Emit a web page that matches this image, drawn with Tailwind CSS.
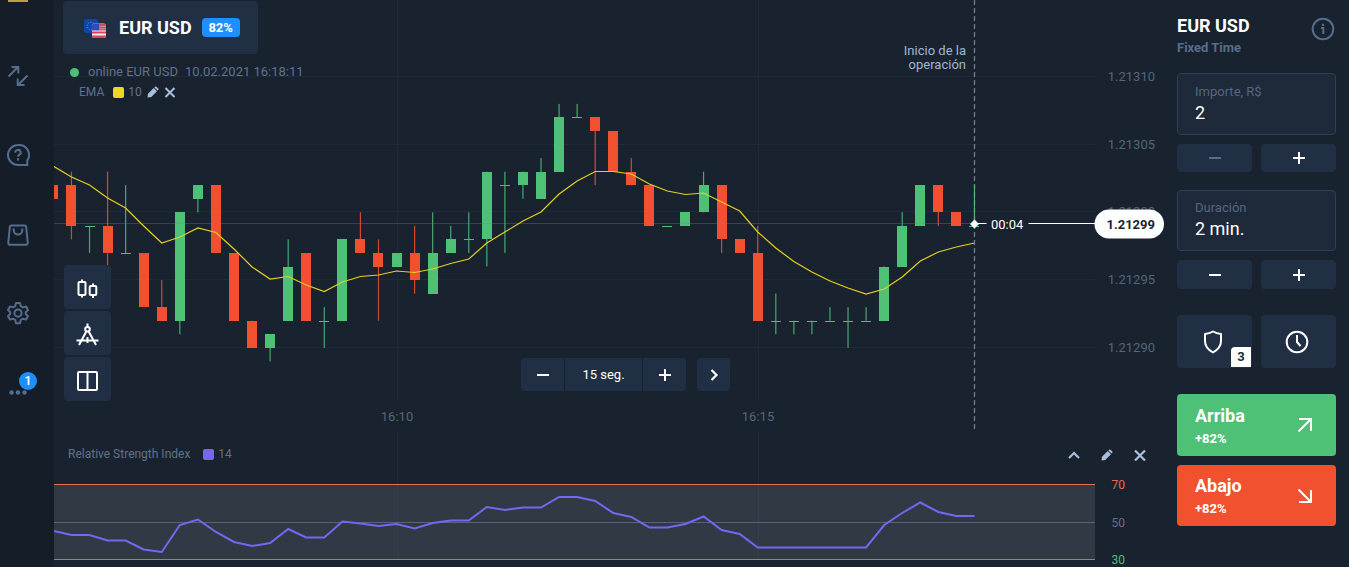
<!DOCTYPE html>
<html lang="es">
<head>
<meta charset="utf-8">
<meta name="viewport" content="width=device-width, initial-scale=1">
<title>EUR USD</title>
<script src="https://cdn.jsdelivr.net/npm/@tailwindcss/browser@4"></script>
</head>
<body class="bg-[#18232f] font-['Roboto',sans-serif] text-white">
<div class="flex min-h-screen overflow-hidden">

  <nav class="flex w-[54px] shrink-0 flex-col bg-[#151d28] text-[#566e8d]">
    <div class="ml-2 h-[2px] w-5 bg-[#c79a3e]"></div>
    <a href="#" aria-label="Operaciones" class="mt-[62px] ml-[6px] block"><svg class="size-6" viewBox="0 0 24 24" fill="none" stroke="currentColor" stroke-width="2"><path d="M2.500 12.500 12 3M5.500 3H12.300V9.500M21.500 11.500 12 21M11.700 14.500V21H18.500"/></svg></a>
    <a href="#" aria-label="Ayuda" class="mt-[55px] ml-[6px] block"><svg class="size-6" viewBox="0 0 24 24" fill="none" stroke="currentColor" stroke-width="2"><path d="M12 2A10 10 0 1 0 12 22H21.300V17.500A10 10 0 0 0 12 2Z"/><path d="M9.300 9.600A2.700 2.500 0 1 1 13.300 11.600C12.400 12.200 12 12.600 12 13.800M12 15.300V17.400"/></svg></a>
    <a href="#" aria-label="Mercado" class="mt-14 ml-[6px] block"><svg class="size-6" viewBox="0 0 24 24" fill="none" stroke="currentColor" stroke-width="2"><path d="M5.500 2.500H18.500Q20 2.500 20.200 4L21.700 19.500Q21.800 21.800 19.500 21.800H4.500Q2.200 21.800 2.300 19.500L3.800 4Q4 2.500 5.500 2.500Z"/><path d="M7.700 5.500V7.200A4.300 4.300 0 0 0 16.300 7.200V5.500"/></svg></a>
    <a href="#" aria-label="Ajustes" class="mt-[54px] ml-[6px] block"><svg class="size-6" viewBox="0 0 24 24" fill="none" stroke="currentColor" stroke-width="2" stroke-linejoin="round"><path d="M10 2H14L14.700 5.100 17 6.400 20 5.500 22 9 19.800 11.200V13L22 15.200 20 18.600 17 17.700 14.700 19 14 22.200H10L9.300 19 7 17.700 4 18.600 2 15.200 4.200 13V11.200L2 9 4 5.500 7 6.400 9.300 5.100Z"/><circle cx="12" cy="12.100" r="3.600"/></svg></a>
    <a href="#" aria-label="Más" class="relative mt-[46px] ml-2 block h-6 w-8"><svg class="size-full" viewBox="0 0 32 24" fill="currentColor"><circle cx="3.500" cy="21.500" r="2.200"/><circle cx="10" cy="21.500" r="2.200"/><circle cx="16.500" cy="21.500" r="2.200"/></svg><span class="absolute top-px left-[11px] flex size-[18px] items-center justify-center rounded-full bg-[#1c90ff] text-[13px] font-medium text-white">1</span></a>
  </nav>

  <main class="flex min-w-0 flex-1 flex-col">
    <section class="relative h-[431px]" aria-label="Gráfico EUR USD">
      <svg class="absolute inset-0 h-full w-full" viewBox="54 0 1111 431" preserveAspectRatio="xMinYMin meet">
        <g stroke="#1e2a37" stroke-width="1"><path d="M54 76.500H1095M54 144.500H1095M54 211.500H1095M54 279.500H1095M54 347.500H1095M397.500 0V401M758.500 0V401"/></g>
        <g id="candles"></g>
        <path d="M54 223.500H975" stroke="#6f8198" stroke-opacity=".35"/>
        <polyline id="ema" fill="none" stroke="#e6cf1e" stroke-width="1.200"/>
        <path d="M974.500 0V431" stroke="#73808c" stroke-width="1.300" stroke-dasharray="5 3"/>
        <path d="M974.500 185V224" stroke="#4fc177" stroke-opacity=".7"/>
        <g fill="#566579" font-size="13" text-anchor="end"><text x="1155" y="81">1.21310</text><text x="1155" y="149">1.21305</text><text x="1155" y="216">1.21300</text><text x="1155" y="284">1.21295</text><text x="1155" y="352">1.21290</text></g>
        <g fill="#566579" font-size="13" text-anchor="middle"><text x="397" y="421">16:10</text><text x="758" y="421">16:15</text></g>
        <g fill="#a0b6d4" font-size="13" text-anchor="end"><text x="966" y="55">Inicio de la</text><text x="966" y="69">operación</text></g>
        <path d="M975 223.500H986.500M1028.500 223.500H1096" stroke="#fff" stroke-width="1.200"/>
        <path d="M974.500 219.500 979 224 974.500 228.500 970 224Z" fill="#fff"/>
        <text x="991" y="229" fill="#fff" font-size="13">00:04</text>
        <rect x="1094.500" y="209.500" width="69.500" height="29" rx="14.500" fill="#fff"/>
        <text x="1155" y="229" fill="#18232f" font-size="13" font-weight="700" text-anchor="end">1.21299</text>
      </svg>

      <button class="absolute top-px left-[9px] flex h-[53px] w-[195px] items-center rounded bg-[#202f43] pl-[21px]">
        <svg class="h-5 w-[23px]" viewBox="0 0 23 20"><rect width="14" height="14" rx="2.500" y="1" fill="#0b47ae"/><circle cx="7" cy="8" r="3.800" fill="none" stroke="#c1b44c" stroke-opacity=".7" stroke-width="1" stroke-dasharray="1 1.400"/><rect x="8" y="5.500" width="14" height="14.500" rx="2.500" fill="#f3f0f3"/><path d="M15.500 5.500H20Q22 5.500 22 8V12.500H15.500ZM8 13.500H22V15.500H8ZM8 17.500H22Q22 20 19.500 20H10.500Q8 20 8 17.500Z" fill="#dc4258"/><path d="M15.500 8.500H22M15.500 10.800H22" stroke="#c79aa6"/><path d="M8 8Q8 5.500 10.500 5.500H15.500V12.500H8Z" fill="#3944bd"/></svg>
        <span class="ml-3 text-[18px] font-bold">EUR USD</span>
        <span class="ml-[10px] flex h-[19px] w-[38px] items-center justify-center rounded bg-[#1c90ff] text-[13px] font-bold">82%</span>
      </button>

      <div class="absolute top-[63px] left-4 flex h-[18px] items-center text-[13px] text-[#62728a]">
        <span class="size-[9px] rounded-full bg-[#4dc077]"></span>
        <span class="ml-[9px]">online EUR USD</span><span class="ml-[7px]">10.02.2021 16:18:11</span>
      </div>
      <div class="absolute top-[84px] left-[25px] flex h-4 items-center text-xs text-[#62728a]">
        <span>EMA</span><span class="ml-[9px] size-[11px] rounded-xs bg-[#efd524]"></span><span class="ml-1">10</span>
        <button aria-label="Editar EMA" class="ml-[5px] text-[#a9bfdc]"><svg class="size-3" viewBox="0 0 12 12" fill="currentColor"><path d="M.500 11.500 1 7.700 6.700 2 10 5.300 4.300 11ZM7.400 1.400 8.300.500Q9 .200 9.700.900L11.100 2.300Q11.800 3 11.400 3.700L10.600 4.600Z"/></svg></button>
        <button aria-label="Quitar EMA" class="ml-[5px] text-[#a9bfdc]"><svg class="size-3" viewBox="0 0 12 12" stroke="currentColor" stroke-width="2"><path d="M1.500 2 10.500 11M10.500 2 1.500 11"/></svg></button>
      </div>

      <div class="absolute top-[265px] left-[10px] flex flex-col gap-[2px]">
        <button aria-label="Tipo de gráfico" class="flex h-11 w-[47px] items-center justify-center rounded bg-[#202f43] pt-1"><svg class="size-6" viewBox="0 0 24 24" fill="none" stroke="#fff" stroke-width="2"><rect x="2.500" y="5" width="7" height="13" rx="1"/><path d="M6 2.500V5M6 18V20.500M17 6.500V9M17 18V21"/><rect x="13.700" y="9" width="6.600" height="9" rx="1"/></svg></button>
        <button aria-label="Dibujo" class="flex h-11 w-[47px] items-center justify-center rounded bg-[#202f43] pt-1"><svg class="size-6" viewBox="0 0 24 24" fill="none" stroke="#fff" stroke-width="2"><path d="M11.500 .500V4M10.300 8.500 3 22M12.700 8.500 20 22M.500 17.500H22.500M11.500 14V20"/><circle cx="11.500" cy="6.200" r="2.300"/></svg></button>
        <button aria-label="Diseño" class="flex h-11 w-[47px] items-center justify-center rounded bg-[#202f43] pt-1"><svg class="size-6" viewBox="0 0 24 24" fill="none" stroke="#fff" stroke-width="2"><rect x="2" y="3" width="19" height="18" rx="1"/><path d="M11.500 3V21"/></svg></button>
      </div>

      <div class="absolute top-[358px] left-[467px] flex h-[33px] text-white">
        <button aria-label="Reducir intervalo" class="flex w-[43px] items-center justify-center rounded-l bg-[#202f43]"><svg class="size-3" viewBox="0 0 12 12" stroke="currentColor" stroke-width="2"><path d="M0 6H12"/></svg></button>
        <button class="ml-px w-[77px] bg-[#202f43] text-[13px]">15 seg.</button>
        <button aria-label="Ampliar intervalo" class="ml-px flex w-[43px] items-center justify-center rounded-r bg-[#202f43]"><svg class="size-3" viewBox="0 0 12 12" stroke="currentColor" stroke-width="2"><path d="M0 6H12M6 0V12"/></svg></button>
        <button aria-label="Siguiente" class="ml-[11px] flex w-[33px] items-center justify-center rounded bg-[#202f43]"><svg class="size-3" viewBox="0 0 12 12" fill="none" stroke="currentColor" stroke-width="2.200"><path d="M3.500 1 8.500 6 3.500 11"/></svg></button>
      </div>
    </section>

    <section class="relative h-[136px]" aria-label="Relative Strength Index">
      <svg class="absolute inset-0 h-full w-full" viewBox="54 431 1111 136" preserveAspectRatio="xMinYMin meet">
        <path d="M54 485H1095V560H54Z" fill="#303944"/>
        <path d="M397.500 431V560M758.500 431V560" stroke="#788fa8" stroke-opacity=".08"/>
        <path d="M54 484.500H1095" stroke="#ea6e55"/><path d="M54 522.500H1095" stroke="#52657d"/><path d="M54 559.500H1095" stroke="#4fa970"/>
        <polyline id="rsi" fill="none" stroke="#7368f2" stroke-width="2"/>
        <g font-size="12" text-anchor="end"><text x="1125" y="489" fill="#e86c51">70</text><text x="1125" y="527" fill="#62728a">50</text><text x="1125" y="564" fill="#4dc077">30</text></g>
      </svg>
      <header class="relative flex h-[46px] items-center pr-[19px] pl-[14px] text-xs text-[#62728a]">
        <h2>Relative Strength Index</h2><span class="ml-[13px] size-[11px] rounded-xs bg-[#7767f5]"></span><span class="ml-1">14</span>
        <div class="ml-auto flex gap-[21px] pt-[2px] text-[#a9bfdc]">
          <button aria-label="Subir"><svg class="size-3" viewBox="0 0 12 12" fill="none" stroke="currentColor" stroke-width="2.200"><path d="M1 9 6 4 11 9"/></svg></button>
          <button aria-label="Editar RSI"><svg class="size-3" viewBox="0 0 12 12" fill="currentColor"><path d="M.500 11.500 1 7.700 6.700 2 10 5.300 4.300 11ZM7.400 1.400 8.300.500Q9 .200 9.700.900L11.100 2.300Q11.800 3 11.400 3.700L10.600 4.600Z"/></svg></button>
          <button aria-label="Quitar RSI"><svg class="size-3" viewBox="0 0 12 12" stroke="currentColor" stroke-width="2.200"><path d="M1 1.500 11 11.500M11 1.500 1 11.500"/></svg></button>
        </div>
      </header>
    </section>
  </main>

  <aside class="w-[184px] shrink-0 pt-4 pr-[13px] pl-3">
    <header class="flex justify-between">
      <div><h1 class="text-[18px] leading-5 font-bold">EUR USD</h1><p class="mt-1 text-[13px] leading-4 font-bold text-[#566e8d]">Fixed Time</p></div>
      <button aria-label="Información" class="mt-px mr-px self-start text-[#566e8d]"><svg class="size-6" viewBox="0 0 24 24" fill="none" stroke="currentColor" stroke-width="2"><circle cx="12" cy="12" r="10.300"/><path d="M10 11H12.300V17M12 6.800V9"/></svg></button>
    </header>

    <div class="mt-[17px] h-[62px] rounded border border-[#2b3f5b] bg-[#1e293a] px-[17px] pt-[10px]">
      <label for="amount" class="block text-[13px] leading-4 text-[#56677f]">Importe, R$</label>
      <input id="amount" value="2" class="mt-[3px] block w-full bg-transparent text-[18px] leading-5 outline-none">
    </div>
    <div class="mt-[9px] grid grid-cols-2 gap-[9px]">
      <button aria-label="Menos importe" class="flex h-7 items-center justify-center rounded bg-[#202f43] text-[#566e8d]"><svg class="size-3" viewBox="0 0 12 12" stroke="currentColor" stroke-width="2"><path d="M0 6H12"/></svg></button>
      <button aria-label="Más importe" class="flex h-7 items-center justify-center rounded bg-[#202f43]"><svg class="size-3" viewBox="0 0 12 12" stroke="currentColor" stroke-width="2"><path d="M0 6H12M6 0V12"/></svg></button>
    </div>

    <div class="mt-[18px] h-[61px] rounded border border-[#2b3f5b] bg-[#1e293a] px-[17px] pt-[9px]">
      <label for="duration" class="block text-[13px] leading-4 text-[#56677f]">Duración</label>
      <input id="duration" value="2 min." class="mt-[3px] block w-full bg-transparent text-[18px] leading-5 outline-none">
    </div>
    <div class="mt-[9px] grid grid-cols-2 gap-[9px]">
      <button aria-label="Menos duración" class="flex h-[29px] items-center justify-center rounded bg-[#202f43]"><svg class="size-3" viewBox="0 0 12 12" stroke="currentColor" stroke-width="2"><path d="M0 6H12"/></svg></button>
      <button aria-label="Más duración" class="flex h-[29px] items-center justify-center rounded bg-[#202f43]"><svg class="size-3" viewBox="0 0 12 12" stroke="currentColor" stroke-width="2"><path d="M0 6H12M6 0V12"/></svg></button>
    </div>

    <div class="mt-[26px] grid grid-cols-2 gap-[9px]">
      <button aria-label="Sin riesgo" class="relative flex h-[53px] items-center justify-center rounded bg-[#202f43] pr-[3px]"><svg class="size-6" viewBox="0 0 24 24" fill="none" stroke="#fff" stroke-width="2"><path d="M12 1.500Q15.500 3.700 20 4V11Q20 18 12 22.500Q4 18 4 11V4Q8.500 3.700 12 1.500Z" stroke-linejoin="round"/></svg><span class="absolute right-px bottom-px flex h-5 w-5 items-center justify-center rounded-tl bg-white text-[13px] font-bold text-[#202f43]">3</span></button>
      <button aria-label="Historial" class="flex h-[53px] items-center justify-center rounded bg-[#202f43] pr-[3px]"><svg class="size-6" viewBox="0 0 24 24" fill="none" stroke="#fff" stroke-width="2"><circle cx="12" cy="12" r="10.300"/><path d="M12 5V12L15.500 16"/></svg></button>
    </div>

    <button class="mt-[26px] flex h-[62px] w-full items-center justify-between rounded bg-[#4fc177] pr-6 pl-[18px] text-left">
      <span class="pt-[2px]"><span class="block text-[18px] leading-5 font-bold">Arriba</span><span class="mt-[5px] block text-[13px] leading-4 font-bold">+82%</span></span>
      <svg class="size-[14px]" viewBox="0 0 14 14" fill="none" stroke="#fff" stroke-width="2"><path d="M.500 13.500 13 1M1 1H13V13"/></svg>
    </button>
    <button class="mt-[9px] flex h-[61px] w-full items-center justify-between rounded bg-[#f25130] pr-6 pl-[18px] text-left">
      <span class="pt-[2px]"><span class="block text-[18px] leading-5 font-bold">Abajo</span><span class="mt-[5px] block text-[13px] leading-4 font-bold">+82%</span></span>
      <svg class="size-[14px]" viewBox="0 0 14 14" fill="none" stroke="#fff" stroke-width="2"><path d="M.500.500 13 13M1 13H13V1"/></svg>
    </button>
  </aside>
</div>

<script>
// Each candle: direction, body high, body low, wick high, wick low, in steps of 0.00001 above 1.21290.
const candles = [
  ['r',12,11,12,11],['r',12,9,13,8],['g',9,9,9,7],['r',9,7,13,6],['g',7,7,12,7],['r',7,3,7,3],['r',3,2,5,2],['g',10,2,10,1],
  ['g',12,11,12,10],['r',12,7,12,7],['r',7,2,7,2],['r',2,0,2,0],['g',1,0,1,-1],['g',6,2,8,2],['r',7,2,7,2],['g',2,2,3,0],
  ['g',8,2,8,2],['r',8,7,10,7],['r',7,6,8,2],['g',7,6,7,6],['r',7,5,9,4],['g',7,4,10,4],['g',8,7,9,7],['g',8,8,10,7],
  ['g',13,8,13,6],['g',12,12,13,7],['g',13,12,13,11],['g',13,11,14,11],['g',17,13,18,13],['g',17,17,18,17],['r',17,16,17,12],
  ['r',16,13,16,13],['r',13,12,14,12],['r',12,9,12,9],['g',9,9,9,9],['g',10,9,10,9],['g',12,10,13,10],['r',12,8,12,7],
  ['r',8,7,8,7],['r',7,2,9,2],['g',2,2,4,1],['g',2,2,2,1],['g',2,2,2,1],['g',2,2,3,2],['g',2,2,3,0],['g',2,2,3,2],
  ['g',6,2,6,2],['g',9,6,10,6],['g',12,9,12,9],['r',12,10,12,9],['r',10,9,10,9],['g',9,9,12,9]
];
const ema = [166.5,177,185,198,208,226,243,237,228,232.5,249,267,279,276.5,285,291.5,282,276.5,275,271,272.5,269,263.5,259,243,232,221,212,194,181,171.5,171.5,174,184,191,194.5,193,202,211,232,248,261.5,272,281,288,294,289,277,261,252,247,243];
const rsi = [531,535,535,540.5,540.5,549.5,552,525,519.5,532,542,546,543,529,537.5,537.5,521.5,523.5,526,524,528.5,523,520.5,520.5,507,510,507.5,507.5,497,497,501,513,517,527.5,527.5,524,516.5,530,534,547.5,547.5,547.5,547.5,547.5,547.5,547.5,525,513,502.5,512,516,516];
const x = i => 53.4 + i * 18.06;
const y = k => 347.8 - k * 13.55;
const colors = { r: '#f25130', g: '#4fc177' };
document.getElementById('candles').innerHTML = candles.map(([d, top, low, wickTop, wickLow], i) => {
  const left = Math.max(54, Math.round(x(i) - 5));
  const width = Math.round(x(i) + 5) - left;
  const bodyTop = Math.round(y(top));
  const height = Math.max(1, Math.round(y(low)) - bodyTop);
  const wick = wickTop === wickLow ? '' : `<rect x="${(x(i) - 0.6).toFixed(2)}" y="${y(wickTop)}" width="1.2" height="${y(wickLow) - y(wickTop)}" fill="${colors[d]}" fill-opacity=".85"/>`;
  return wick + `<rect x="${left}" y="${bodyTop}" width="${width}" height="${height}" fill="${colors[d]}"/>`;
}).join('');
const line = values => values.map((v, i) => `${Math.max(54, x(i)).toFixed(1)},${v}`).join(' ');
document.getElementById('ema').setAttribute('points', line(ema));
document.getElementById('rsi').setAttribute('points', line(rsi));
</script>
</body>
</html>
